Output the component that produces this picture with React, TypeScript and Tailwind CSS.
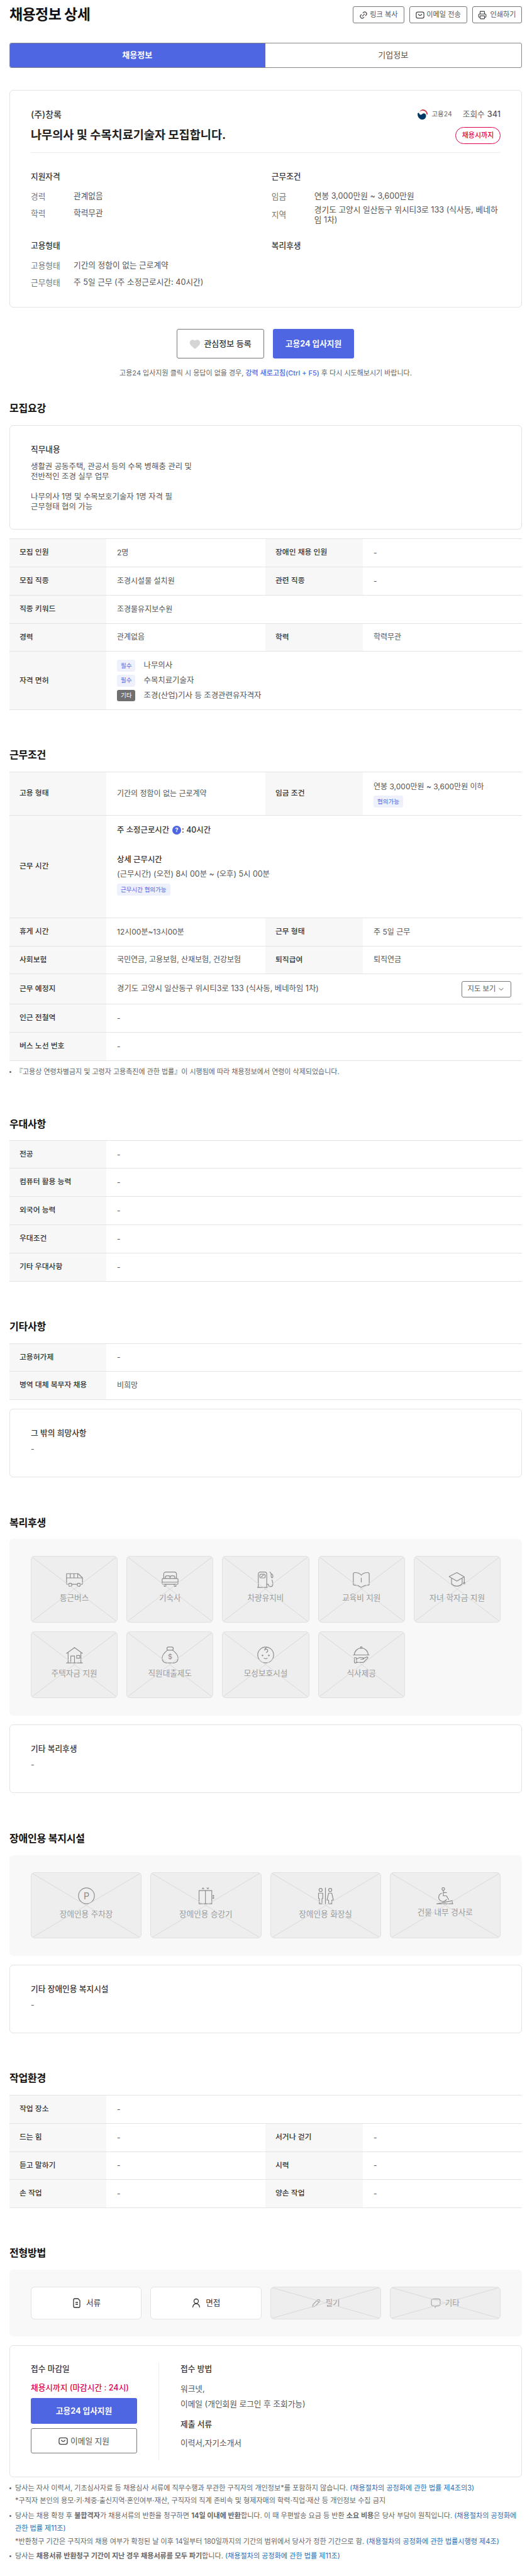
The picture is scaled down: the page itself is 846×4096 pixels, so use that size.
import { ChevronDown, Heart, Link2, Printer } from "lucide-react";
import type { ReactNode } from "react";

function SectionTitle({ children, top }: { children: ReactNode; top: string }) {
  return <h2 className={`${top} h-[20px] text-[16px] leading-[20px] font-bold text-[#111] tracking-[-0.2px]`}>{children}</h2>;
}

function Label({ children }: { children: ReactNode }) {
  return <div className="flex items-center bg-[#f7f7f7] pl-[16px] text-[11.8px] font-medium text-[#333]">{children}</div>;
}

function Value({ children, wide }: { children: ReactNode; wide?: boolean }) {
  return (
    <div className={wide ? "col-span-3 flex items-center pl-[17px] text-[12px] text-[#555]" : "flex items-center pl-[17px] text-[12px] text-[#555]"}>
      {children}
    </div>
  );
}

function WideRow({ label, value }: { label: string; value: ReactNode }) {
  return (
    <div className="grid h-[44.8px] grid-cols-[154px_253px_155px_1fr] border-b border-[#e3e3e3]">
      <Label>{label}</Label>
      <Value wide>{value}</Value>
    </div>
  );
}

function PairRow({ a, b, c, d }: { a: string; b: string; c: string; d: string }) {
  return (
    <div className="grid h-[44.8px] grid-cols-[154px_253px_155px_1fr] border-b border-[#e3e3e3]">
      <Label>{a}</Label>
      <Value>{b}</Value>
      <Label>{c}</Label>
      <Value>{d}</Value>
    </div>
  );
}

function InfoRow({ label, children }: { label: string; children: ReactNode }) {
  return (
    <div className="flex min-h-[27px] items-center text-[12.7px]">
      <span className="w-[68px] shrink-0 text-[#777]">{label}</span>
      <span className="leading-[16px] text-[#555]">{children}</span>
    </div>
  );
}

function Cross() {
  return (
    <svg className="absolute inset-0 h-full w-full" viewBox="0 0 100 100" preserveAspectRatio="none">
      <line x1="0" y1="0" x2="100" y2="100" stroke="#d9d9d9" strokeWidth="1" vectorEffect="non-scaling-stroke" />
      <line x1="100" y1="0" x2="0" y2="100" stroke="#d9d9d9" strokeWidth="1" vectorEffect="non-scaling-stroke" />
    </svg>
  );
}

function Glyph({ children }: { children: ReactNode }) {
  return (
    <svg className="h-[27px] w-[27px]" viewBox="0 0 32 32" fill="none" stroke="#8c8c8c" strokeWidth="1.4" strokeLinecap="round" strokeLinejoin="round">
      {children}
    </svg>
  );
}

function Tile({ icon, label, raise }: { icon: ReactNode; label: string; raise?: boolean }) {
  return (
    <div className="relative flex h-[105.6px] flex-col items-center overflow-hidden rounded-[6px] border border-[#e0e0e0] bg-[#eeeeee] pt-[23px]">
      {icon}
      <span className={raise ? "mt-[5px] text-[12.6px] leading-[16px] text-[#999]" : "mt-[8px] text-[12.6px] leading-[16px] text-[#999]"}>{label}</span>
      <Cross />
    </div>
  );
}

function MailIcon({ size }: { size: string }) {
  return (
    <svg className={size} viewBox="0 0 16 16" fill="none" stroke="#444" strokeWidth="1.4" strokeLinecap="round" strokeLinejoin="round">
      <rect x="1" y="2.5" width="14" height="11" rx="3" />
      <path d="M5 6.5c1 1.6 2 2.2 3 2.2s2-.6 3-2.2" />
    </svg>
  );
}

function NoteCard({ title, top }: { title: string; top: string }) {
  return (
    <div className={`${top} h-[109px] rounded-[6px] border border-[#e3e3e3] px-[33px] pt-[29px]`}>
      <div className="h-[18px] text-[12.7px] leading-[18px] font-medium text-[#333]">{title}</div>
      <div className="mt-[8px] text-[12px] leading-[16px] text-[#555]">-</div>
    </div>
  );
}

function Tag({ children, gray }: { children: ReactNode; gray?: boolean }) {
  return (
    <span
      className={
        gray
          ? "inline-flex h-[18.6px] items-center rounded-[3px] bg-[#707070] px-[6px] text-[9.5px] text-white"
          : "inline-flex h-[18.6px] items-center rounded-[3px] bg-[#eef0fc] px-[6px] text-[9.5px] text-[#4e66e2]"
      }
    >
      {children}
    </span>
  );
}

export default function App() {
  return (
    <div lang="ko" className="w-[846px] bg-white pr-[16px] pl-[15px] font-['Inter','Noto_Sans_CJK_KR',sans-serif] text-[#333]">
      <header className="flex items-center justify-between pt-[10px]">
        <h1 className="text-[23px] leading-[27px] font-bold tracking-[-0.6px] text-[#111]">채용정보 상세</h1>
        <div className="flex gap-[8px] text-[11.2px] text-[#555]">
          <button className="flex h-[27px] w-[82px] items-center justify-center gap-[3px] rounded-[3px] border border-[#777]">
            <Link2 className="h-[14px] w-[14px] -rotate-45 text-[#444]" />
            링크 복사
          </button>
          <button className="flex h-[27px] w-[92px] items-center justify-center gap-[3px] rounded-[3px] border border-[#777]">
            <MailIcon size="h-[14px] w-[14px]" />
            이메일 전송
          </button>
          <button className="flex h-[27px] w-[79px] items-center justify-center gap-[5px] rounded-[3px] border border-[#777]">
            <Printer className="h-[14px] w-[14px] text-[#444]" />
            인쇄하기
          </button>
        </div>
      </header>

      <div className="mt-[30.6px] flex h-[40.5px] overflow-hidden rounded-[3px] border border-[#888] text-[13px]">
        <div className="-my-px -ml-px flex w-1/2 items-center justify-center bg-[#4e66e2] font-bold text-white">채용정보</div>
        <div className="flex flex-1 items-center justify-center text-[#555]">기업정보</div>
      </div>

      <section className="mt-[34.7px] h-[346.5px] rounded-[6px] border border-[#e3e3e3] px-[33px] pt-[28px]">
        <div className="flex h-[20px] items-center justify-between">
          <span className="text-[14px] font-medium text-[#333]">(주)창록</span>
          <div className="flex items-center">
            <svg className="h-[18px] w-[18px]" viewBox="0 0 20 20">
              <path d="M10 1a9 9 0 0 1 9 9h-2a7 7 0 0 0-13-3.500A9 9 0 0 1 10 1z" fill="#cd2e3a" />
              <path d="M1.200 8C1 12 2 15 4.500 17c2 2 4.500 2.500 6.500 2 3.500-.8 5.500-4 5-7.500-.5-2.500-3-4-5.500-3-1.500.5-2 1.800-3.300 2-1.700.3-3-1-3.500-3-1.500-.6-2.200.2-2.500.5z" fill="#003764" />
            </svg>
            <span className="ml-[5px] text-[10.5px] text-[#666]">고용24</span>
            <span className="ml-[17px] text-[12.7px] text-[#666]">조회수</span>
            <span className="ml-[4px] text-[12.7px] font-medium text-[#555]">341</span>
          </div>
        </div>
        <div className="mt-[10px] flex h-[27px] items-center justify-between">
          <h3 className="text-[18.6px] font-bold text-[#222]">나무의사 및 수목치료기술자 모집합니다.</h3>
          <span className="flex h-[27px] w-[72px] items-center justify-center rounded-full border border-[#e0004d] text-[11px] font-medium text-[#e0004d]">채용시까지</span>
        </div>
        <div className="mt-[13px] border-t border-[#eeeeee]" />
        <div className="mt-[29px] grid grid-cols-[382.800px_1fr] gap-y-[20px]">
          <div>
            <div className="mb-[9px] h-[18px] text-[12.7px] leading-[18px] font-medium text-[#333]">지원자격</div>
            <InfoRow label="경력">관계없음</InfoRow>
            <InfoRow label="학력">학력무관</InfoRow>
          </div>
          <div>
            <div className="mb-[9px] h-[18px] text-[12.7px] leading-[18px] font-medium text-[#333]">근무조건</div>
            <InfoRow label="임금">연봉 3,000만원 ~ 3,600만원</InfoRow>
            <div className="h-[36px]">
              <InfoRow label="지역">경기도 고양시 일산동구 위시티3로 133 (식사동, 베네하임 1차)</InfoRow>
            </div>
          </div>
          <div>
            <div className="mb-[9px] h-[18px] text-[12.7px] leading-[18px] font-medium text-[#333]">고용형태</div>
            <InfoRow label="고용형태">기간의 정함이 없는 근로계약</InfoRow>
            <InfoRow label="근무형태">주 5일 근무 (주 소정근로시간: 40시간)</InfoRow>
          </div>
          <div>
            <div className="h-[18px] text-[12.7px] leading-[18px] font-medium text-[#333]">복리후생</div>
          </div>
        </div>
      </section>

      <div className="mt-[33.7px] flex justify-center gap-[14px] pr-[1px]">
        <button className="flex h-[47.3px] w-[139px] items-center justify-center gap-[5px] rounded-[3px] border border-[#777] text-[13px] font-medium text-[#333]">
          <Heart className="h-[18px] w-[18px] fill-[#d5d5d5] text-[#d5d5d5]" />
          관심정보 등록
        </button>
        <button className="h-[47.3px] w-[129px] rounded-[3px] bg-[#4e66e2] text-[12.7px] font-bold text-white">고용24 입사지원</button>
      </div>
      <p className="mt-[15px] text-center text-[11px] leading-[16px] text-[#666]">
        고용24 입사지원 클릭 시 응답이 없을 경우, <span className="font-medium text-[#4e66e2]">강력 새로고침(Ctrl + F5)</span> 후 다시 시도해보시기 바랍니다.
      </p>

      <SectionTitle top="mt-[38px]">모집요강</SectionTitle>
      <div className="mt-[17px] h-[165.6px] rounded-[6px] border border-[#e3e3e3] px-[33px] pt-[29px]">
        <div className="h-[18px] text-[12.7px] leading-[18px] font-medium text-[#333]">직무내용</div>
        <p className="mt-[10px] text-[12.4px] leading-[16px] text-[#555]">
          생활권 공동주택, 관공서 등의 수목 병해충 관리 및
          <br />
          전반적인 조경 실무 업무
          <br />
          <br />
          나무의사 1명 및 수목보호기술자 1명 자격 필
          <br />
          근무형태 협의 가능
        </p>
      </div>

      <div className="mt-[14.3px] border-t border-[#e3e3e3]">
        <PairRow a="모집 인원" b="2명" c="장애인 채용 인원" d="-" />
        <PairRow a="모집 직종" b="조경시설물 설치원" c="관련 직종" d="-" />
        <WideRow label="직종 키워드" value="조경물유지보수원" />
        <PairRow a="경력" b="관계없음" c="학력" d="학력무관" />
        <div className="grid h-[93px] grid-cols-[154px_1fr] border-b border-[#e3e3e3]">
          <Label>자격 면허</Label>
          <div className="flex flex-col justify-center gap-[5px] pl-[17px] text-[12.4px] text-[#555]">
            <div className="flex items-center gap-[13px]"><Tag>필수</Tag>나무의사</div>
            <div className="flex items-center gap-[13px]"><Tag>필수</Tag>수목치료기술자</div>
            <div className="flex items-center gap-[13px]"><Tag gray>기타</Tag>조경(산업)기사 등 조경관련유자격자</div>
          </div>
        </div>
      </div>

      <SectionTitle top="mt-[61px]">근무조건</SectionTitle>
      <div className="mt-[17px] border-t border-[#e3e3e3]">
        <div className="grid h-[68.4px] grid-cols-[154px_253px_155px_1fr] border-b border-[#e3e3e3]">
          <Label>고용 형태</Label>
          <Value>기간의 정함이 없는 근로계약</Value>
          <Label>임금 조건</Label>
          <div className="flex flex-col items-start pt-[14.5px] pl-[17px] text-[12px] leading-[16px] text-[#555]">
            연봉 3,000만원 ~ 3,600만원 이하
            <div className="mt-[6.5px]"><Tag>협의가능</Tag></div>
          </div>
        </div>
        <div className="grid h-[163px] grid-cols-[154px_1fr] border-b border-[#e3e3e3]">
          <Label>근무 시간</Label>
          <div className="flex flex-col items-start pt-[14.8px] pl-[17px] text-[12.4px] leading-[16px] text-[#555]">
            <div className="flex items-center font-medium text-[#333]">
              주 소정근로시간
              <span className="mr-[1px] ml-[5px] flex h-[14px] w-[14px] items-center justify-center rounded-full bg-[#4e66e2] text-[9px] font-bold text-white">?</span>
              : 40시간
            </div>
            <div className="mt-[31px] font-medium text-[#333]">상세 근무시간</div>
            <div className="mt-[7px]">(근무시간) (오전) 8시 00분 ~ (오후) 5시 00분</div>
            <div className="mt-[7.8px]"><Tag>근무시간 협의가능</Tag></div>
          </div>
        </div>
        <PairRow a="휴게 시간" b="12시00분~13시00분" c="근무 형태" d="주 5일 근무" />
        <PairRow a="사회보험" b="국민연금, 고용보험, 산재보험, 건강보험" c="퇴직급여" d="퇴직연금" />
        <div className="grid h-[47.7px] grid-cols-[154px_1fr] border-b border-[#e3e3e3]">
          <Label>근무 예정지</Label>
          <div className="flex items-center justify-between pr-[17px] pl-[17px] text-[12.4px] text-[#555]">
            경기도 고양시 일산동구 위시티3로 133 (식사동, 베네하임 1차)
            <button className="flex h-[26px] w-[79px] items-center justify-center gap-[3px] rounded-[3px] border border-[#777] text-[11.3px]">
              지도 보기
              <ChevronDown className="h-[12px] w-[12px]" />
            </button>
          </div>
        </div>
        <WideRow label="인근 전철역" value="-" />
        <WideRow label="버스 노선 번호" value="-" />
      </div>
      <p className="mt-[10px] flex h-[16px] items-center text-[11px] text-[#666]">
        <span className="mr-[7px] h-[3px] w-[3px] rounded-full bg-[#666]" />
        『고용상 연령차별금지 및 고령자 고용촉진에 관한 법률』이 시행됨에 따라 채용정보에서 연령이 삭제되었습니다.
      </p>

      <SectionTitle top="mt-[64px]">우대사항</SectionTitle>
      <div className="mt-[16px] border-t border-[#e3e3e3]">
        <WideRow label="전공" value="-" />
        <WideRow label="컴퓨터 활용 능력" value="-" />
        <WideRow label="외국어 능력" value="-" />
        <WideRow label="우대조건" value="-" />
        <WideRow label="기타 우대사항" value="-" />
      </div>

      <SectionTitle top="mt-[61px]">기타사항</SectionTitle>
      <div className="mt-[17px] border-t border-[#e3e3e3]">
        <WideRow label="고용허가제" value="-" />
        <WideRow label="병역 대체 복무자 채용" value="비희망" />
      </div>
      <NoteCard title="그 밖의 희망사항" top="mt-[14px]" />

      <SectionTitle top="mt-[62px]">복리후생</SectionTitle>
      <div className="mt-[16px] grid h-[280.5px] grid-cols-5 content-start gap-x-[14px] gap-y-[14.4px] rounded-[6px] bg-[#f8f8f8] px-[34px] py-[27px]">
        <Tile
          label="통근버스"
          icon={<Glyph><path d="M1 5h22l8 8v11a1 1 0 0 1-1 1H2a1 1 0 0 1-1-1z" /><path d="M1 13h30M8 5v8M15 5v8M22 5v8" /><circle cx="8" cy="26" r="3" fill="#eee" /><circle cx="24" cy="26" r="3" fill="#eee" /></Glyph>}
        />
        <Tile
          label="기숙사"
          icon={<Glyph><path d="M4 14V6a4 4 0 0 1 4-4h16a4 4 0 0 1 4 4v8" /><path d="M7 14v-2a3 3 0 0 1 3-3h3a3 3 0 0 1 3 3 3 3 0 0 1 3-3h3a3 3 0 0 1 3 3v2M16 12v2" /><rect x="1" y="14" width="30" height="11" rx="2" /><path d="M1 21h30M5 25v4h3v-4M24 25v4h3v-4" /></Glyph>}
        />
        <Tile
          label="차량유지비"
          icon={<Glyph><path d="M2 30V6a4 4 0 0 1 4-4h8a4 4 0 0 1 4 4v24M0.500 31h19" /><rect x="5" y="6" width="10" height="7" rx="2" /><path d="M8 11l2-2 2-1M18 25h3c.5 6 8 6 8.500 0 .3-4-1-5-1.500-8" /><path d="M24 2l3 4c1-1 3 2 2.500 5-.3 2-2 2-2.500 1-1-2-1-4-.5-6" /></Glyph>}
        />
        <Tile
          label="교육비 지원"
          icon={<Glyph><path d="M1 6c0-2 1-3 3-3 5 0 9 1 12 5 3-4 7-5 12-5 2 0 3 1 3 3v19c0 1-.5 1.500-1.500 1.500-5 0-9 1-13.500 4.500-4.500-3.500-8.500-4.500-13.500-4.500-1 0-1.500-.5-1.500-1.500z" /><path d="M16 13v8" /></Glyph>}
        />
        <Tile
          label="자녀 학자금 지원"
          icon={<Glyph><path d="M16 3l14 8-14 8-14-8c-.5-.3-.5-.7 0-1z" /><path d="M6 14v10c5 6 15 6 20 0V14M30 12v9" /><circle cx="30" cy="23" r="1.500" fill="#8c8c8c" /></Glyph>}
        />
        <Tile
          label="주택자금 지원"
          icon={<Glyph><path d="M1 13L16 2l15 11M4 12v19M28 12v19M1 31h30M9 31V18h7v13" /><rect x="20" y="17" width="6" height="5" /></Glyph>}
        />
        <Tile
          label="직원대출제도"
          icon={<Glyph><rect x="10" y="1" width="12" height="6" rx="3" /><path d="M11 7C6 11 1 16 1 22c0 5 3 9 8 9h14c5 0 8-4 8-9 0-6-5-11-10-15" /><text x="16" y="24" textAnchor="middle" fontSize="13" fill="#8c8c8c" stroke="none">$</text></Glyph>}
        />
        <Tile
          label="모성보호시설"
          icon={<Glyph><circle cx="16" cy="16" r="15" /><path d="M17 11a3 3 0 1 0-3-4c0-2 1-4 4-5" /><circle cx="10" cy="17" r=".8" fill="#8c8c8c" /><circle cx="22" cy="17" r=".8" fill="#8c8c8c" /><path d="M13 22c1.500 1.500 4.500 1.500 6 0" /></Glyph>}
        />
        <Tile
          label="식사제공"
          icon={<Glyph><path d="M3 16a13 13 0 0 1 26 0M1 16h30" /><circle cx="16" cy="2" r="1.500" /><rect x="3" y="21" width="4" height="10" rx="1" /><path d="M7 23c3 0 5-3 8-2h4c2 0 2 3 0 3h-4M19 23l7-3c2-1 3 1 2 2l-7 7a3 3 0 0 1-2 1H7" /></Glyph>}
        />
      </div>
      <NoteCard title="기타 복리후생" top="mt-[14px]" />

      <SectionTitle top="mt-[62px]">장애인용 복지시설</SectionTitle>
      <div className="mt-[17px] grid h-[160px] grid-cols-4 gap-x-[14px] rounded-[6px] bg-[#f8f8f8] px-[34px] py-[27px]">
        <Tile
          label="장애인용 주차장"
          icon={<Glyph><circle cx="16" cy="16" r="15" /><text x="16" y="22" textAnchor="middle" fontSize="17" fill="#8c8c8c" stroke="none">P</text></Glyph>}
        />
        <Tile
          label="장애인용 승강기"
          icon={<Glyph><rect x="3" y="6" width="24" height="25" /><path d="M15 6v25M9 3l1.500-2L12 3M18 1l1.500 2L21 1" /><circle cx="30" cy="16" r=".8" fill="#8c8c8c" /><circle cx="30" cy="20" r=".8" fill="#8c8c8c" /></Glyph>}
        />
        <Tile
          label="장애인용 화장실"
          icon={<Glyph><path d="M16 1v30" /><circle cx="7" cy="5" r="3" /><circle cx="25" cy="5" r="3" /><path d="M3 11h8v10H9.500v10h-5V21H3zM22 11h6l3 13h-3v7h-6v-7h-3z" /></Glyph>}
        />
        <Tile
          raise
          label="건물 내부 경사로"
          icon={<Glyph><circle cx="13" cy="3" r="2.500" /><path d="M13 6v10h6l4 7M13 10h6M10 11a8 8 0 1 0 9 12" /><path d="M2 31l28-6v6zM0 31h31" /></Glyph>}
        />
      </div>
      <NoteCard title="기타 장애인용 복지시설" top="mt-[14px]" />

      <SectionTitle top="mt-[61.3px]">작업환경</SectionTitle>
      <div className="mt-[17px] border-t border-[#e3e3e3]">
        <WideRow label="작업 장소" value="-" />
        <PairRow a="드는 힘" b="-" c="서거나 걷기" d="-" />
        <PairRow a="듣고 말하기" b="-" c="시력" d="-" />
        <PairRow a="손 작업" b="-" c="양손 작업" d="-" />
      </div>

      <SectionTitle top="mt-[61px]">전형방법</SectionTitle>
      <div className="mt-[17px] grid h-[106px] grid-cols-4 gap-x-[14px] rounded-[6px] bg-[#f8f8f8] px-[34px] py-[27px] text-[12.6px]">
        <div className="flex h-[51.6px] items-center justify-center gap-[7px] rounded-[6px] border border-[#e3e3e3] bg-white text-[#333]">
          <svg className="h-[16px] w-[16px]" viewBox="0 0 16 16" fill="none" stroke="#333" strokeWidth="1.3">
            <path d="M3 3a2 2 0 0 1 2-2h5l3 3v9a2 2 0 0 1-2 2H5a2 2 0 0 1-2-2zM6 7h4M6 10h4" />
          </svg>
          서류
        </div>
        <div className="flex h-[51.6px] items-center justify-center gap-[7px] rounded-[6px] border border-[#e3e3e3] bg-white text-[#333]">
          <svg className="h-[16px] w-[16px]" viewBox="0 0 16 16" fill="none" stroke="#333" strokeWidth="1.3">
            <circle cx="8" cy="5" r="3.500" />
            <path d="M2.500 15c0-3.500 2.500-6 5.500-6s5.500 2.500 5.500 6" />
          </svg>
          면접
        </div>
        <div className="relative flex h-[51.6px] items-center justify-center gap-[7px] overflow-hidden rounded-[6px] border border-[#e0e0e0] bg-[#eeeeee] text-[#999]">
          <svg className="h-[16px] w-[16px]" viewBox="0 0 16 16" fill="none" stroke="#aaa" strokeWidth="1.3">
            <path d="M2 14l1-4 7-7a2 2 0 0 1 3 3l-7 7zM9 4l3 3" />
          </svg>
          필기
          <Cross />
        </div>
        <div className="relative flex h-[51.6px] items-center justify-center gap-[7px] overflow-hidden rounded-[6px] border border-[#e0e0e0] bg-[#eeeeee] text-[#999]">
          <svg className="h-[16px] w-[16px]" viewBox="0 0 16 16" fill="none" stroke="#aaa" strokeWidth="1.3">
            <path d="M4 1.500h8a3 3 0 0 1 3 3v5a3 3 0 0 1-3 3H9l-2 2v-2H4a3 3 0 0 1-3-3v-5a3 3 0 0 1 3-3zM5.500 7h.01M8 7h.01M10.500 7h.01" />
          </svg>
          기타
          <Cross />
        </div>
      </div>

      <div className="mt-[14px] flex h-[210px] rounded-[6px] border border-[#e3e3e3] px-[33px] pt-[27px]">
        <div className="h-[155px] w-[204px] shrink-0 border-r border-[#eeeeee]">
          <div className="h-[20px] text-[12.7px] leading-[20px] font-medium text-[#333]">접수 마감일</div>
          <div className="mt-[10px] h-[20px] text-[12.7px] leading-[20px] font-medium text-[#e0004d]">채용시까지 (마감시간 : 24시)</div>
          <button className="mt-[6px] h-[41px] w-[169px] rounded-[3px] bg-[#4e66e2] text-[12.7px] font-bold text-white">고용24 입사지원</button>
          <button className="mt-[7px] flex h-[40px] w-[169px] items-center justify-center gap-[4px] rounded-[3px] border border-[#777] text-[12.7px] text-[#555]">
            <MailIcon size="h-[15px] w-[15px]" />
            이메일 지원
          </button>
        </div>
        <div className="pl-[34px]">
          <div className="h-[20px] text-[12.7px] leading-[20px] font-medium text-[#333]">접수 방법</div>
          <div className="mt-[10px] text-[12.7px] leading-[24px] text-[#555]">
            워크넷,
            <br />
            이메일 (개인회원 로그인 후 조회가능)
          </div>
          <div className="mt-[10px] h-[20px] text-[12.7px] leading-[20px] font-medium text-[#333]">제출 서류</div>
          <div className="mt-[10px] h-[20px] text-[12.7px] leading-[20px] text-[#555]">이력서,자기소개서</div>
        </div>
      </div>

      <ul className="mt-[7px] flex flex-col gap-[3.4px] pb-[17px] text-[11.1px] leading-[20.3px] text-[#666]">
        <li className="relative pl-[9px] before:absolute before:top-[9px] before:left-0 before:h-[3px] before:w-[3px] before:rounded-full before:bg-[#666]">
          당사는 자사 이력서, 기초심사자료 등 채용심사 서류에 직무수행과 무관한 구직자의 개인정보*를 포함하지 않습니다. <span className="text-[#1f6fb2]">(채용절차의 공정화에 관한 법률 제4조의3)</span>
          <br />
          *구직자 본인의 용모·키·체중·출신지역·혼인여부·재산, 구직자의 직계 존비속 및 형제자매의 학력·직업·재산 등 개인정보 수집 금지
        </li>
        <li className="relative pl-[9px] before:absolute before:top-[9px] before:left-0 before:h-[3px] before:w-[3px] before:rounded-full before:bg-[#666]">
          당사는 채용 확정 후 <b>불합격자</b>가 채용서류의 반환을 청구하면 <b>14일 이내에 반환</b>합니다. 이 때 우편발송 요금 등 반환 <b>소요 비용</b>은 당사 부담이 원칙입니다. <span className="text-[#1f6fb2]">(채용절차의 공정화에 관한 법률 제11조)</span>
          <br />
          *반환청구 기간은 구직자의 채용 여부가 확정된 날 이후 14일부터 180일까지의 기간의 범위에서 당사가 정한 기간으로 함. <span className="text-[#1f6fb2]">(채용절차의 공정화에 관한 법률시행령 제4조)</span>
        </li>
        <li className="relative pl-[9px] before:absolute before:top-[9px] before:left-0 before:h-[3px] before:w-[3px] before:rounded-full before:bg-[#666]">
          당사는 <b>채용서류 반환청구 기간이 지난 경우 채용서류를 모두 파기</b>합니다. <span className="text-[#1f6fb2]">(채용절차의 공정화에 관한 법률 제11조)</span>
        </li>
      </ul>
    </div>
  );
}
